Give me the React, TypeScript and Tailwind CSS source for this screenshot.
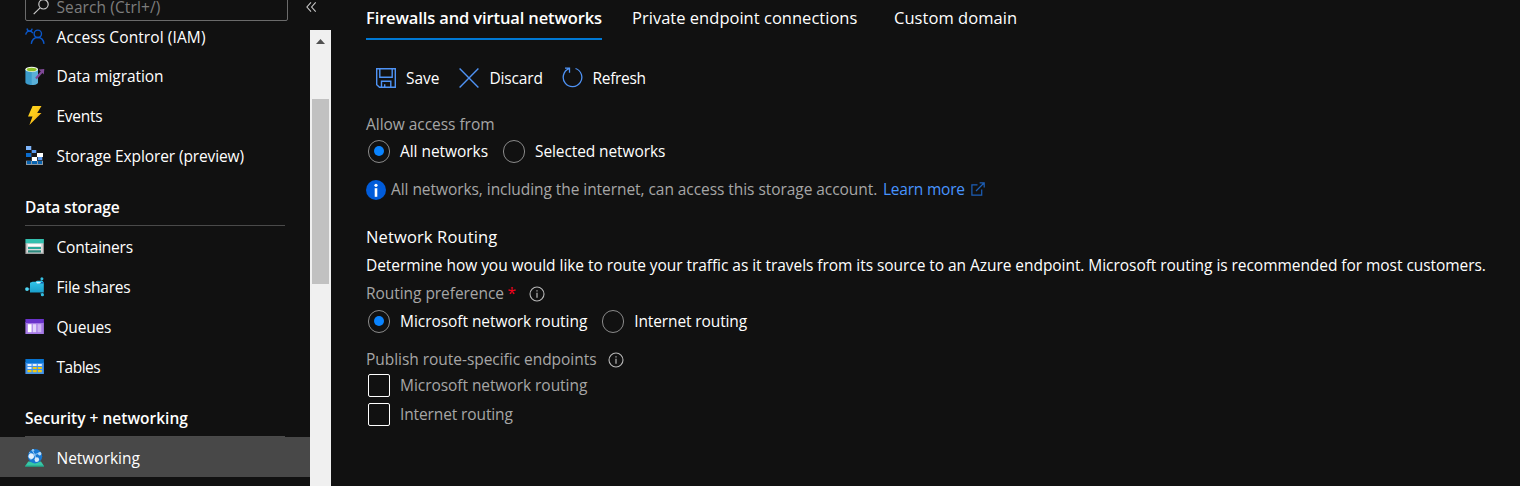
import type { ReactNode } from 'react'

function AccessIcon() {
  return (
    <svg width="20" height="20" viewBox="0 0 20 20" fill="none" stroke="#0b57c9" strokeWidth="1.4">
      <circle cx="12.8" cy="6.8" r="3.7" />
      <path d="M6.300 16.800c.6-3.900 3.200-6.300 6.500-6.300s5.700 2.400 6.200 6.300" />
      <path d="M.7 7.600C1.200 5.300 2.600 4.100 4.500 4.100c1.600 0 2.700.700 3.400 2" />
      <path d="M2 1.500c.3 1.600 1.100 2.600 2.500 2.600S6.900 3.100 7.200 1.700" />
    </svg>
  )
}

function MigrationIcon() {
  return (
    <svg width="20" height="20" viewBox="0 0 20 20">
      <path d="M.4 3.300v13c0 1.500 2.800 2.700 6.300 2.700s6.300-1.200 6.300-2.700v-13z" fill="#3b9bcb" />
      <path d="M6.700 3.300H13v13c0 1.500-2.800 2.700-6.300 2.700z" fill="#5ab0d8" />
      <ellipse cx="6.700" cy="3.400" rx="6.300" ry="2.700" fill="#f4f8ee" />
      <ellipse cx="6.700" cy="3.500" rx="5" ry="1.800" fill="#8cbf26" />
      <path d="M11 12.500 17.200 5.400" stroke="#804998" strokeWidth="2.300" />
      <path d="M13.800 3.600 19.300 3l-.5 5.600z" fill="#804998" />
    </svg>
  )
}

function EventsIcon() {
  return (
    <svg width="20" height="20" viewBox="0 0 20 20">
      <defs>
        <linearGradient id="bolt" x1="0" y1="0" x2="1" y2="1">
          <stop offset="0" stopColor="#ffd91f" />
          <stop offset=".5" stopColor="#fcc81a" />
          <stop offset="1" stopColor="#f39a12" />
        </linearGradient>
      </defs>
      <path d="M7.600 0h8.900l-4.300 6.900h4.300L4.400 18.900l3.100-8.500H3z" fill="url(#bolt)" />
    </svg>
  )
}

function ExplorerIcon() {
  return (
    <svg width="20" height="20" viewBox="0 0 20 20" shapeRendering="crispEdges">
      <path d="M1 0h6v4h5v3h6v12H1v-5h5v-3H1V7h5V4H1z" fill="#2f3b4c" />
      <path d="M1 0h5v4H1z" fill="#7fb6fb" />
      <path d="M7 4h4v3H7z" fill="#5a9af0" />
      <path d="M1 7h5v4H1z" fill="#0a6ccf" />
      <path d="M7 7h5v4H7z" fill="#16191f" />
      <path d="M12 7h6v4h-6zM7 11h5v4H7z" fill="#fff" />
      <path d="M13 11h4v3h-4z" fill="#5a9af0" />
      <path d="M1 15h17v4H1z" fill="#8c99a6" />
      <path d="M2 15h4v3H2zM7 15h5v3H7zM13 15h4v3h-4z" fill="#0864b0" />
    </svg>
  )
}

function ContainersIcon() {
  return (
    <svg width="20" height="20" viewBox="0 0 20 20">
      <path d="M.4 6h18.500v11H.4z" fill="#a0a0a0" />
      <path d="M1.500 6h16.300v9.700H1.500z" fill="#dcdcdc" />
      <path d="M.4 2h18.500v4.300H.4z" fill="#34bfae" />
      <path d="M3 7.200h13v1.900H3z" fill="#fff" />
      <path d="M3 10h13v2H3z" fill="#2aa899" />
      <path d="M3 13.300h13v2.200H3z" fill="#2b8a7e" />
    </svg>
  )
}

function FileSharesIcon() {
  return (
    <svg width="20" height="20" viewBox="0 0 20 20">
      <defs>
        <linearGradient id="folder" x1="0" y1="0" x2="0" y2="1">
          <stop offset="0" stopColor="#32c8ec" />
          <stop offset="1" stopColor="#1a9fcb" />
        </linearGradient>
      </defs>
      <path d="M2 12h4M15.500 5.500 17 1.500M15.500 16l2 2" stroke="#1a6fa5" strokeWidth="1" />
      <path d="M5 5.800 7.500 4.800h3L12 3.800h5.500l1.300 2V15.500H5z" fill="url(#folder)" />
      <path d="M12 5h6.800v1.500H14z" fill="#1264a8" />
      <path d="m11 4.800 5 .2-1 1.500h-3z" fill="#d6f4ff" />
      <circle cx="2" cy="12.100" r="1.900" fill="#50d8f5" />
      <circle cx="16.900" cy="1.700" r="1.500" fill="#35bfe2" />
      <circle cx="17.400" cy="17.700" r="1.600" fill="#35bfe2" />
    </svg>
  )
}

function QueuesIcon() {
  return (
    <svg width="20" height="20" viewBox="0 0 20 20">
      <path d="M.4 5h18.500v12H.4z" fill="#a67ae6" />
      <path d="M.4 2h18.500v4H.4z" fill="#6a33cb" />
      <path d="M2.800 7.200h3.800v8H2.800z" fill="#fff" />
      <path d="M7.700 7.200h3.600v8H7.700z" fill="#e3d4fa" />
      <path d="M12.500 7.200h3.800v8h-3.800z" fill="#cdb2f3" />
    </svg>
  )
}

function TablesIcon() {
  return (
    <svg width="20" height="20" viewBox="0 0 20 20">
      <path d="M.4 5h18.500v12H.4z" fill="#4294ee" />
      <path d="M.4 2h18.500v4H.4z" fill="#0873d0" />
      <path d="M2.500 7h4v2h-4zM7.700 7h4v2h-4zM12.800 7h4v2h-4zM2.500 10h4v2h-4z" fill="#e5effa" />
      <path d="M7.700 10h4v2h-4zM12.800 10h4v2h-4zM2.500 13h4v2.300h-4zM7.700 13h4v2.300h-4zM12.800 13h4v2.300h-4z" fill="#f0c814" />
    </svg>
  )
}

function NetworkingIcon() {
  return (
    <svg width="20" height="20" viewBox="0 0 20 20">
      <path d="M3.300 13.500h12.700l3 4.500v.600H.2V18z" fill="#36c7a6" />
      <path d="M.2 17.600H19v1.200H.2z" fill="#22977d" />
      <circle cx="10" cy="8.200" r="7.200" fill="#1879d3" />
      <path d="M4 4.500C7 6.600 10 7 13 5.500l2.700-1M7 2l3 5 1 7M5.500 12l4.500-5" stroke="#8fc5f5" strokeWidth="1" fill="none" />
      <circle cx="6.200" cy="8.200" r="2.700" fill="#e3f0fc" />
      <circle cx="11.800" cy="11.600" r="2.300" fill="#d5e8fb" />
      <circle cx="14.700" cy="5.700" r="1.700" fill="#b5d8f8" />
      <circle cx="8" cy="2.200" r="1.200" fill="#8fc5f5" />
    </svg>
  )
}

function NavItem({ icon, label, className = '' }: { icon: ReactNode; label: string; className?: string }) {
  return (
    <li className={`flex h-10 shrink-0 items-center gap-[11.500px] pl-[25px] ${className}`}>
      <span className="-mt-0.5 size-5 shrink-0">{icon}</span>
      <span className="whitespace-nowrap">{label}</span>
    </li>
  )
}

function NavHeading({ label, className }: { label: string; className: string }) {
  return (
    <li className={`flex h-[50px] shrink-0 flex-col pl-[25px] font-semibold ${className}`}>
      <span className="h-[29px] leading-[22px]">{label}</span>
      <span className="h-px w-[260px] bg-[#4a4a4a]" />
    </li>
  )
}

function Sidebar() {
  return (
    <aside className="flex h-full w-[331px] shrink-0 flex-col">
      <div className="flex h-[30px] shrink-0 items-start pl-[25px]">
        <div className="-mt-2 flex h-[29px] w-[263px] items-center rounded-[2px] border border-[#6b6b6b] pl-[7px] text-[#7d7d7d]">
          <svg width="17" height="17" viewBox="0 0 17 17" fill="none" stroke="#c8c8c8" strokeWidth="1.200">
            <circle cx="10.500" cy="6.300" r="4.700" />
            <path d="M7 9.900.7 16.200" />
          </svg>
          <span className="ml-[6.500px] pt-px leading-[18px] tracking-[0.1px]">Search (Ctrl+/)</span>
        </div>
        <svg className="mt-[1px] ml-[18px]" width="11" height="12" viewBox="0 0 11 12" fill="none" stroke="#c8c8c8" strokeWidth="1.100">
          <path d="M5 1.300.9 6 5 10.700M9.700 1.300 5.600 6l4.100 4.700" />
        </svg>
      </div>
      <div className="flex min-h-0 flex-1">
        <ul className="flex w-[310px] flex-col">
          <li className="-mt-[13px]" />
          <NavItem icon={<AccessIcon />} label="Access Control (IAM)" className="pt-0.5 tracking-[0.1px]" />
          <NavItem icon={<MigrationIcon />} label="Data migration" className="tracking-[-0.07px]" />
          <NavItem icon={<EventsIcon />} label="Events" className="tracking-[-0.25px]" />
          <NavItem icon={<ExplorerIcon />} label="Storage Explorer (preview)" className="tracking-[-0.11px]" />
          <NavHeading label="Data storage" className="pt-[19px] tracking-[-0.1px]" />
          <NavItem icon={<ContainersIcon />} label="Containers" className="pt-0.5 tracking-[-0.22px]" />
          <NavItem icon={<FileSharesIcon />} label="File shares" className="pt-0.5 tracking-[-0.24px]" />
          <NavItem icon={<QueuesIcon />} label="Queues" className="pt-0.5 tracking-[-0.2px]" />
          <NavItem icon={<TablesIcon />} label="Tables" className="pt-0.5 tracking-[-0.5px]" />
          <NavHeading label="Security + networking" className="pt-5 tracking-[0.01px]" />
          <NavItem icon={<NetworkingIcon />} label="Networking" className="bg-[#484848] pt-1 tracking-[-0.02px]" />
        </ul>
        <div className="flex w-[21px] flex-col items-center bg-[#f0f0f0]">
          <svg className="mt-[9px]" width="9" height="5" viewBox="0 0 9 5">
            <path d="M0 5 4.500 0 9 5z" fill="#505050" />
          </svg>
          <div className="mt-[55px] h-[185px] w-[17px] bg-[#c1c1c1]" />
        </div>
      </div>
    </aside>
  )
}

function Radio({ label, checked = false, className = '' }: { label: string; checked?: boolean; className?: string }) {
  return (
    <label className="flex items-center">
      <span className="-mt-0.5 flex h-[23px] w-[22px] items-center justify-center rounded-full border border-[#8a8a8a]">
        {checked && <span className="size-[10.500px] rounded-full bg-[#0a84ff]" />}
      </span>
      <span className={`ml-[10px] whitespace-nowrap ${className}`}>{label}</span>
    </label>
  )
}

function Checkbox({ label, className }: { label: string; className: string }) {
  return (
    <label className="flex h-[29px] items-center text-[#a6a6a6]">
      <span className="h-[23px] w-[22px] rounded-[2px] border border-white" />
      <span className={`ml-[10px] ${className}`}>{label}</span>
    </label>
  )
}

function InfoOutline() {
  return (
    <svg width="16" height="16" viewBox="0 0 16 16" fill="none" stroke="#b8b8b8">
      <circle cx="8" cy="8" r="7" strokeWidth="1.100" />
      <path d="M8 6.700v5M8 4.200v1.300" strokeWidth="1.200" />
    </svg>
  )
}

function Main() {
  return (
    <main className="flex min-w-0 flex-1 flex-col pl-[35px] whitespace-nowrap">
      <nav className="flex h-[40px] shrink-0 gap-[30px] text-[16.500px] leading-[36px]">
        <span className="h-[39.500px] w-[236px] border-b-2 border-[#0078d4] font-semibold tracking-[-0.13px]">Firewalls and virtual networks</span>
        <span className="w-[232px] tracking-[0.02px]">Private endpoint connections</span>
        <span className="tracking-[0.05px]">Custom domain</span>
      </nav>

      <div className="flex h-[75px] shrink-0 items-center pl-[10px]">
        <svg width="20" height="20" viewBox="0 0 20 20" fill="none" stroke="#4f93f5" strokeWidth="1.400">
          <path d="M.7.7h18.600v18.600H3.500L.7 16.800zM3.800.7v8.600h12.400V.7M5.500 19.300v-6.100h9.300v6.100M8.700 19.300v-3" />
        </svg>
        <span className="ml-[10px] w-[53px] pt-0.5">Save</span>
        <svg width="20" height="20" viewBox="0 0 20 20" fill="none" stroke="#4f93f5" strokeWidth="1.400">
          <path d="m.6.6 18.800 18.800M19.400.6.6 19.400" />
        </svg>
        <span className="ml-[10.500px] w-[72.500px] pt-0.5 tracking-[-0.15px]">Discard</span>
        <svg width="21" height="21" viewBox="0 0 21 21" fill="none" stroke="#4f93f5" strokeWidth="1.300">
          <path d="M13.500 1.500a9.300 9.300 0 1 1-6.500.2M3 1.200h4.500v4.500" />
        </svg>
        <span className="ml-[9.500px] pt-0.5 tracking-[-0.3px]">Refresh</span>
      </div>

      <div className="h-[22px] shrink-0 leading-[18px] tracking-[-0.04px] text-[#a6a6a6]">Allow access from</div>
      <div className="mt-px flex h-[28px] shrink-0 items-center gap-[15px] pl-[2px]">
        <Radio label="All networks" checked className="tracking-[-0.05px]" />
        <Radio label="Selected networks" className="tracking-[-0.1px]" />
      </div>

      <div className="mt-[13px] flex h-[22px] shrink-0 items-center text-[#a6a6a6]">
        <svg width="20" height="20" viewBox="0 0 20 20">
          <circle cx="10" cy="10" r="10" fill="#015cda" />
          <path d="M8.700 8.200h2.600v8.600H8.700z" fill="#fff" />
          <circle cx="10" cy="5.300" r="1.600" fill="#fff" />
        </svg>
        <span className="ml-[5px] w-[492px] tracking-[-0.06px]">All networks, including the internet, can access this storage account.</span>
        <span className="tracking-[-0.22px] text-[#4894fe]">Learn more</span>
        <svg className="-mt-0.5 ml-[6px]" width="14" height="14" viewBox="0 0 14 14" fill="none" stroke="#1c5fb8" strokeWidth="1.200">
          <path d="M6.500 2.800H.9v10.300h9.800V7.500M5 9 13 1M8.600.8h4.600v4.600" />
        </svg>
      </div>

      <h2 className="mt-[24px] h-[26px] shrink-0 text-[16.500px] leading-[24px] tracking-[0.14px]">Network Routing</h2>
      <p className="mt-[3px] h-[22px] shrink-0 leading-[22px] tracking-[-0.052px]">
        Determine how you would like to route your traffic as it travels from its source to an Azure endpoint. Microsoft routing is recommended for most customers.
      </p>
      <div className="mt-[7px] flex h-[22px] shrink-0 items-center text-[#a6a6a6]">
        <span className="w-[141.500px] tracking-[-0.05px]">Routing preference</span>
        <span className="w-[21px] text-[#f1001c]">*</span>
        <InfoOutline />
      </div>
      <div className="mt-[3px] flex h-[28px] shrink-0 items-center gap-[15px] pl-[2px]">
        <Radio label="Microsoft network routing" checked className="tracking-[-0.05px]" />
        <Radio label="Internet routing" className="tracking-[-0.12px]" />
      </div>

      <div className="mt-[13px] flex h-[22px] shrink-0 items-center text-[#a6a6a6]">
        <span className="w-[241.500px] tracking-[-0.04px]">Publish route-specific endpoints</span>
        <InfoOutline />
      </div>
      <div className="flex flex-col pl-[2px]">
        <Checkbox label="Microsoft network routing" className="tracking-[-0.05px]" />
        <Checkbox label="Internet routing" className="tracking-[-0.12px]" />
      </div>
    </main>
  )
}

export default function App() {
  return (
    <div className="flex h-[486px] w-[1520px] overflow-hidden bg-[#111111] font-['Open_Sans','Noto_Sans',sans-serif] text-[15.500px] text-white">
      <Sidebar />
      <Main />
    </div>
  )
}
